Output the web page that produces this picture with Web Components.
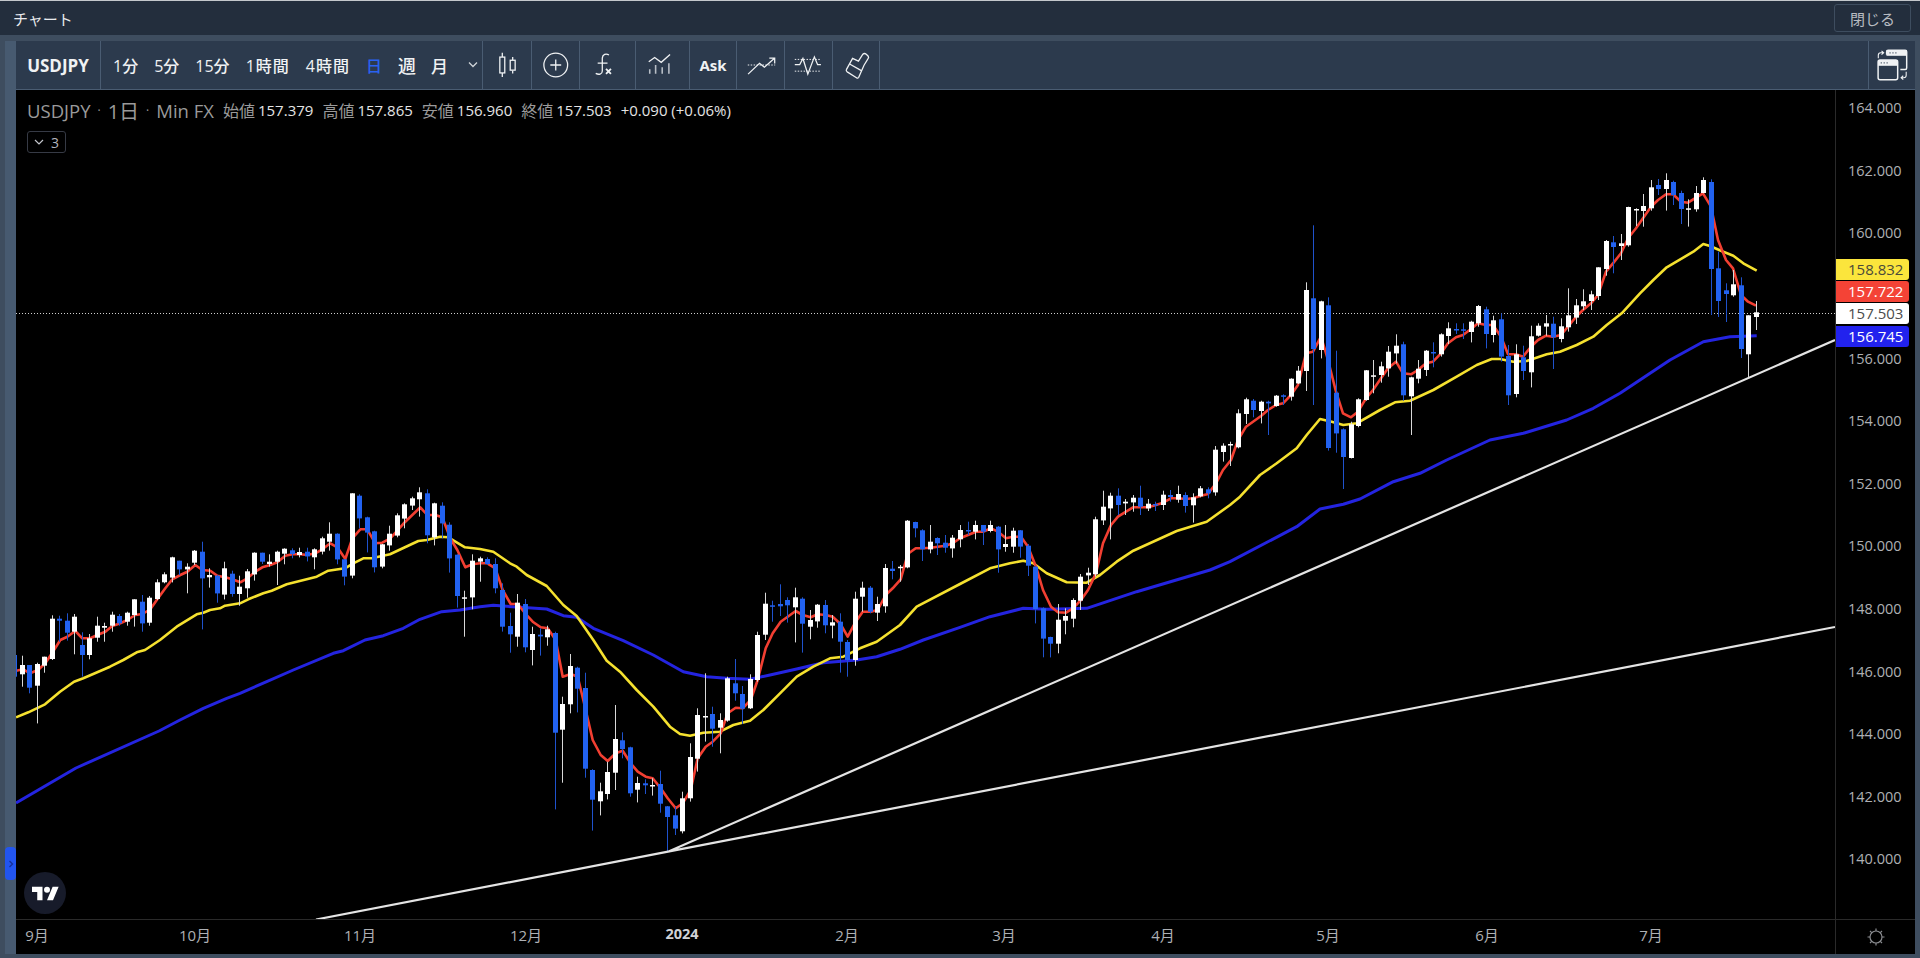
<!DOCTYPE html>
<html lang="ja">
<head>
<meta charset="utf-8">
<title>チャート</title>
<style>
  html, body { margin: 0; height: 100%; background: #3e4d5f; overflow: hidden; }
  body { font-family: "Open Sans", "Noto Sans CJK JP", sans-serif; }
</style>
</head>
<body>
<app-window heading="チャート" close-label="閉じる">
  <chart-toolbar></chart-toolbar>
  <chart-pane></chart-pane>
</app-window>

<script>
const FONT = `"Open Sans", "Noto Sans CJK JP", sans-serif`;

class AppWindow extends HTMLElement {
  constructor() {
    super();
    this.attachShadow({ mode: "open" });
    this.shadowRoot.innerHTML = `
      <style>
        :host { display: flex; flex-direction: column; height: 958px; font-family: ${FONT}; background: #3e4d5f; }
        .title {
          height: 34px; flex: none; display: flex; align-items: center; justify-content: space-between;
          background: #232e3d; border-top: 1px solid #c4c8cc; padding: 0 9px 0 13px; color: #e8eaed; font-size: 15px;
        }
        button {
          width: 77px; height: 28px; padding: 0; margin: 0; background: transparent; border: 1px solid #3e4d5f;
          border-radius: 3px; color: #b8bcc2; font: 15px ${FONT};
        }
        .frame { flex: 1; min-height: 0; display: flex; padding: 6px 5px 4px 5px; }
        .side { width: 11px; flex: none; background: #475a70; position: relative; }
        .handle {
          position: absolute; left: 0; top: 806px; width: 11px; height: 33px; background: #2255f0;
          border-radius: 4px; display: flex; align-items: center; justify-content: center;
        }
        .main { flex: 1; min-width: 0; display: flex; flex-direction: column; }
        ::slotted(chart-pane) { flex: 1; min-height: 0; }
      </style>
      <div class="title"><span id="heading"></span><button id="close"></button></div>
      <div class="frame">
        <div class="side">
          <div class="handle"><svg width="6" height="10" viewBox="0 0 6 10"><path d="M1.5 2l3 3-3 3" fill="none" stroke="#16309a" stroke-width="1.4"/></svg></div>
        </div>
        <div class="main"><slot></slot></div>
      </div>`;
  }
  connectedCallback() {
    this.shadowRoot.getElementById("heading").textContent = this.getAttribute("heading");
    this.shadowRoot.getElementById("close").textContent = this.getAttribute("close-label");
  }
}

// one toolbar cell, closed by a thin divider on the right
class ToolCell extends HTMLElement {
  constructor() {
    super();
    this.attachShadow({ mode: "open" });
    this.shadowRoot.innerHTML = `
      <style>
        :host {
          display: flex; align-items: center; justify-content: center; flex: none; box-sizing: border-box;
          height: 100%; border-right: 1px solid #4a5c72; color: #f0f2f4;
        }
        :host([borderless]) { border-right: 0; }
      </style>
      <slot></slot>`;
  }
}

class ChartToolbar extends HTMLElement {
  constructor() {
    super();
    this.attachShadow({ mode: "open" });
    const icon = (w, body) => `<svg width="${w}" height="48" viewBox="0 0 ${w} 48" fill="none" stroke="#f0f2f4" stroke-width="1.3">${body}</svg>`;
    this.shadowRoot.innerHTML = `
      <style>
        :host {
          display: flex; flex: none; height: 49px; box-sizing: border-box; background: #2c3a4d;
          border-bottom: 1px solid #4a5c72; color: #f0f2f4; font-family: ${FONT};
        }
        .symbol { font-size: 17px; font-weight: 700; }
        .intervals { display: flex; align-items: center; gap: 16px; font-size: 16px; font-weight: 500; padding-left: 12px; width: 100%; box-sizing: border-box; }
        .hours { letter-spacing: 1px; }
        .active { color: #2a62f0; }
        .week { font-size: 18px; margin-right: 2px; }
        .month { font-size: 17px; margin-left: -3px; margin-right: 2px; }
        .ask { font-size: 15px; font-weight: 700; }
        .grow { flex: 1; }
      </style>
      <tool-cell class="symbol" style="width:85px">USDJPY</tool-cell>
      <tool-cell style="width:382px">
        <div class="intervals">
          <span>1分</span><span>5分</span><span>15分</span><span class="hours">1時間</span><span class="hours">4時間</span>
          <span class="active">日</span><span class="week">週</span><span class="month">月</span>
          <svg width="14" height="8" viewBox="0 0 14 8" fill="none" stroke="#d0d4d8" stroke-width="1.3"><path d="M3 1.5l4 4 4-4"/></svg>
        </div>
      </tool-cell>
      <tool-cell style="width:48.5px">${icon(48, `
        <path d="M19.5 11.5v4.5M19.5 32v4M30 16v3M30 29.5v3"/>
        <rect x="17" y="16" width="5" height="16"/><rect x="27.5" y="19.2" width="5" height="10"/>`)}</tool-cell>
      <tool-cell style="width:48.5px">${icon(48, `<circle cx="24" cy="24" r="12"/><path d="M24 18.5v11M18.5 24h11"/>`)}</tool-cell>
      <tool-cell style="width:56px">${icon(56, `
        <path d="M29.5 13.8C26.5 12 23 13 22.7 17v13c0 3.5-3.6 4.2-6.7 2.5M18 22h10"/>
        <path d="M26.5 28l5 5M31.5 28l-5 5" stroke-width="1.9"/>`)}</tool-cell>
      <tool-cell style="width:54px">${icon(54, `
        <path d="M13 20.7l6-4.4 6.7 5 9-8"/>
        <path d="M14 28.3V33M20 24v9M26.7 26.3V33M33.5 22.3V33" stroke="#b8bec6" stroke-width="1.6"/>`)}</tool-cell>
      <tool-cell class="ask" style="width:47px">Ask</tool-cell>
      <tool-cell style="width:48px">${icon(48, `
        <path d="M11 24h28" stroke-dasharray="1.5 1.5" stroke-width="1"/>
        <path d="M11.3 33.3L23 22.3l5 4 10-9M33 17h5.5v5.5"/>`)}</tool-cell>
      <tool-cell style="width:48px">${icon(48, `
        <path d="M10 18.3h27M10 30.3h27" stroke-dasharray="1.5 1.5" stroke-width="1"/>
        <path d="M10 23.7h5l3.3-6.4 5 16 6.7-17.6 3.3 8h3.4"/>`)}</tool-cell>
      <tool-cell style="width:47px">${icon(47, `
        <path d="M20 17.3l6 2.7 4.5-7q1.5-1.5 3.5 0l2 2q1 1.5-.5 3l-3.8 6.3-5.4 12.2q-.8 1.5-2.3.5l-9.5-6q-1.5-1-.7-2.5z"/>
        <path d="M17 23l12.400 7"/>`)}</tool-cell>
      <div class="grow"></div>
      <tool-cell borderless style="width:47px;border-left:1px solid #4a5c72">${icon(47, `
        <path d="M18 13.5v-3q0-1.5 1.5-1.5h17.5q1.5 0 1.5 1.5v16.5q0 1.5-1.5 1.5h-5" stroke-width="1.5"/>
        <path d="M18.5 9.5h19.5v4.5H18.5z" fill="#f0f2f4"/>
        <rect x="9.3" y="19" width="20" height="20" rx="2" fill="#2c3a4d" stroke-width="1.5"/>
        <path d="M9.8 19.5h19v4.7h-19z" fill="#f0f2f4"/>
        <path d="M21 11.7h1M24 11.7h1M27 11.7h1M12 21.8h1M15 21.8h1M18 21.8h1" stroke="#2c3a4d"/>
        <path d="M9.5 17v-3q0-2.500 2.500-2.500h2.800M12.800 9.500l2.200 2-2.200 2" stroke-width="1.1"/>
        <path d="M38 31v3.500q0 2.500-2.500 2.500h-2.500M35 35l-2.200 2 2.200 2" stroke-width="1.1"/>`)}</tool-cell>`;
  }
}

// candles as read off the reference: [colour, high, body top, body bottom, low], in crop coordinates
const W = 1, B = 0;
const SEGMENTS = [
  { x0: 0, y0: 460, u0: 43.5, rows: [
    [B,585,585,650,650],[W,587,615,643,680],[B,615,615,683,700],[W,608,612,677,790],[W,590,590,617,638],[W,466,476,597,600],
    [B,467,476,482,545],[B,460,482,518,542],[W,462,470,515,583],[B,517,555,585,650],[W,522,535,585,598],[W,470,497,533,545],
    [W,488,498,503,545],[W,455,464,497,515],[B,462,468,490,497],[W,455,458,485,497],[W,418,418,465,500],[B,405,425,490,515],
    [W,408,413,488,497],[W,358,367,417,420],[W,337,343,367,370],[W,290,292,353,367],[B,302,302,328,345],[W,310,320,328,400],
    [W,270,272,308,315],[B,245,275,355,508],[W,325,345,352,383],[B,345,347,400,428],[W,305,325,404,418],[B,332,341,402,410],
    [W,347,380,402,437],[W,327,334,385,413],[W,277,278,343,362],[B,278,278,305,312],[W,283,305,312,320],[W,272,275,305,375],
    [W,265,266,281,313],[B,265,271,282,295],[W,263,276,285,292],[B,263,275,289,304],[W,265,268,292,328],[W,230,235,275,283],
    [W,187,221,245,272],[B,220,221,298,313],[B,298,298,350,376],[W,100,100,347,355],[B,103,107,175,205],[B,170,172,218,277],
    [B,212,214,322,337],[W,252,253,320,325],[W,197,221,256,272],[W,160,166,227,232],[W,130,133,176,205],[W,110,115,137,150],
    [W,82,97,118,170],[B,88,100,226,250],[W,128,130,232,256],[B,127,137,190,235],[B,187,194,295,338],[B,283,284,408,443],
    [W,392,412,416,530],[W,283,302,412,448] ] },
  { x0: 480, y0: 480, u0: 0, rows: [
    [W,230,235,245,305],[B,232,237,252,255],[B,235,252,325,340],[B,310,330,440,455],[B,398,438,463,518],[W,342,368,470,500],
    [B,357,372,502,517],[W,440,462,510,556],[B,445,464,469,527],[W,437,448,472,497],[B,455,459,758,988],[W,650,672,749,908],
    [W,522,558,673,700],[B,560,563,626,697],[B,578,624,866,893],[B,868,870,959,1052],[W,908,934,964,1006],[W,845,876,942,958],
    [W,675,777,878,930],[B,757,781,807,835],[B,800,802,940,950],[W,890,909,929,967],[B,898,910,916,942],[W,895,915,919,947],
    [B,872,912,971,998],[B,978,979,1011,1115],[B,980,1006,1046,1065],[W,935,955,1054,1060],[W,790,831,955,965],[W,685,705,836,875],
    [W,580,708,712,785],[B,680,702,746,800],[W,700,720,743,820],[W,590,595,722,725],[B,537,610,640,662],[B,618,642,686,732],
    [W,583,597,685,687],[W,455,465,600,605],[W,338,371,464,480],[B,362,376,380,425],[B,313,372,379,408],[B,352,360,376,428],
    [W,323,352,382,487],[B,352,356,431,518],[W,390,420,440,478],[W,372,374,424,443],[B,360,375,436,460],[W,405,427,437,475],
    [B,400,425,485,578],[B,480,486,540,590],[W,335,356,540,557],[W,305,323,350,395],[B,318,323,395,400],[W,350,372,398,423],
    [W,252,264,379,398],[B,243,266,273,298],[W,255,260,264,305],[W,120,122,262,265],[B,125,126,145,172],[B,148,151,208,243],
    [W,135,185,208,220],[B,172,174,190,225],[B,165,188,203,218],[W,165,173,205,233] ] },
  { x0: 960, y0: 400, u0: 2.5, rows: [
    [W,375,390,418,442],[B,365,390,394,405],[W,362,375,395,418],[B,375,375,395,435],[W,362,375,393,397],[B,378,380,448,518],
    [W,375,432,441,455],[W,383,392,440,458],[B,390,391,440,473],[B,432,437,497,528],[B,497,500,627,670],[B,622,625,716,772],
    [B,710,711,731,772],[W,612,659,731,760],[W,625,648,662,703],[W,595,600,656,682],[W,522,530,602,630],[W,503,518,526,555],
    [W,350,358,523,530],[W,272,320,361,375],[W,278,287,325,418],[B,265,287,315,345],[W,297,305,310,345],[W,285,293,307,335],
    [B,257,293,320,345],[W,297,311,325,333],[B,305,312,315,333],[W,272,284,315,330],[B,270,285,291,305],[W,257,282,299,308],
    [B,277,285,318,338],[W,280,292,316,368],[W,258,265,289,292],[B,262,268,280,295],[W,138,149,277,287],[W,130,137,156,185],
    [W,125,132,135,198],[W,28,40,142,145] ] },
  { x0: 1240, y0: 160, u0: 18, rows: [
    [W,713,718,762,792],[B,717,722,750,772],[W,722,725,753,790],[B,722,725,730,825],[W,705,707,738,740],[B,703,706,710,735],
    [W,655,656,710,722],[W,618,632,670,672],[W,367,390,633,693],[B,196,415,567,735],[W,422,424,570,595],[B,412,436,864,872],
    [B,572,698,820,878],[B,805,808,891,987],[W,785,793,894,895],[W,715,718,798,802],[W,630,631,720,722],[W,600,646,650,700],
    [W,605,619,645,668],[W,558,575,625,650],[W,523,557,580,610],[B,545,553,706,722],[W,650,652,709,825],[W,600,626,656,670],
    [W,570,572,630,648],[B,547,576,580,622],[W,520,523,583,590],[W,487,505,528,552],[B,490,507,510,522],[B,490,508,512,537],
    [W,482,485,516,547],[W,435,438,490,500],[B,440,448,522,565],[W,467,481,525,547],[B,460,478,590,605],[B,555,588,706,735],
    [W,553,583,702,712],[B,557,592,633,660],[W,497,529,637,682],[W,490,497,527,530],[W,465,490,500,527],[B,470,491,532,627],
    [W,475,499,537,547],[W,385,466,502,515],[W,417,436,473,492],[W,388,424,439,450],[W,392,403,423,450],[W,322,322,408,420],
    [W,240,243,327,347],[B,228,247,261,340],[W,222,250,258,300],[W,140,141,256,260],[W,145,147,150,198],[W,102,138,153,200],
    [W,60,82,145,152],[B,57,75,87,105],[W,40,60,87,152],[B,62,66,105,135],[B,92,99,147,192],[W,118,145,149,200],
    [W,78,99,148,155],[W,52,60,99,100],[B,58,66,327,465],[B,275,325,423,471],[B,370,391,402,486],[W,330,373,406,410],
    [B,352,376,567,594],[W,466,466,583,652],[W,423,457,471,510] ] }
];

// moving averages, same crop coordinates as the candles: [x0, y0, u, v, u, v, ...]
const RED = [
  [0,460, 48,632,70,628,90,640,114,630,136,610,157,578,181,540,202,530,226,513,247,535,271,535,292,525,316,515,337,498,361,490,382,480,406,465,427,462,451,448,472,418,496,385,517,358,541,345,562,335,586,315,607,330,631,332,652,347,676,352,697,358,721,367,742,355,766,335,787,322,811,315,832,307,856,287,877,283,901,283,922,285,946,280,967,268,991,250,1012,262,1036,297,1057,235,1081,208,1102,208,1126,250,1147,248,1171,235,1192,212,1216,185,1237,165,1261,142,1282,165,1306,165,1327,172,1351,235,1372,270,1396,322,1417,313,1440,310],
  [480,480, 22,250,46,265,68,330,92,372,113,372,137,402,158,425,182,442,203,445,227,480,248,590,272,582,293,590,317,690,338,780,362,825,383,843,407,820,428,812,452,850,473,875,497,890,518,895,542,925,563,955,587,985,608,970,632,930,653,835,677,800,698,785,722,760,743,700,767,683,788,685,812,660,833,600,857,505,878,460,902,425,923,410,947,393,968,405,992,412,1013,403,1037,405,1058,410,1082,433,1103,470,1127,425,1148,395,1172,395,1193,390,1217,345,1238,325,1262,298,1283,222,1307,205,1328,205,1352,203,1373,200,1397,197,1418,190,1440,175],
  [960,400, 24,405,48,395,69,395,93,385,114,395,138,415,159,410,183,410,204,440,228,500,249,570,273,620,294,637,318,638,339,625,363,600,384,570,408,520,429,430,453,375,474,350,498,335,519,322,543,322,564,322,588,315,609,308,633,295,654,295,678,297,699,295,723,287,744,282,768,250,789,210,813,180,834,120],
  [1240,160, 18,800,39,785,63,768,84,750,108,735,129,730,153,705,174,675,198,580,219,575,243,530,264,600,288,695,309,760,333,772,354,755,378,715,399,690,423,655,444,625,468,605,489,640,513,643,534,630,558,610,579,605,603,580,624,550,648,532,669,525,693,507,714,490,738,495,759,495,783,530,804,583,828,583,849,590,873,560,894,540,918,527,939,530,963,525,984,500,1008,470,1029,450,1053,430,1074,405,1098,335,1119,310,1143,280,1164,235,1188,205,1209,175,1233,140,1254,120,1278,103,1299,103,1323,125,1344,128,1368,113,1389,100,1413,140,1434,240,1458,300,1479,325,1503,405,1524,425,1548,437]
];
const YELLOW = [
  [0,460, 48,772,85,757,135,733,180,695,222,665,250,655,330,620,370,600,410,577,435,570,480,540,530,500,590,463,610,458,630,450,660,445,675,437,720,430,745,418,790,400,815,392,860,373,950,350,985,332,1035,325,1060,310,1090,295,1115,295,1170,283,1255,243,1280,240,1320,230,1345,232,1395,262,1440,267],
  [480,480, 40,215,90,250,110,260,140,285,200,318,250,375,290,408,340,480,380,542,420,575,470,630,520,680,570,740,600,762,630,767,670,758,720,755,760,735,810,722,850,690,900,640,950,590,1000,560,1050,535,1090,530,1140,505,1190,485,1260,435,1310,380,1440,312],
  [960,400, 90,505,150,490,190,482,220,490,260,520,320,547,380,548,420,525,470,485,520,452,650,393,740,365,810,315],
  [1240,160, 0,1010,60,945,110,910,170,865,200,825,240,777,275,785,310,795,350,790,420,750,465,727,510,722,580,690,650,650,710,615,755,597,780,597,820,605,860,603,920,583,960,575,1010,555,1060,530,1100,495,1145,460,1200,400,1240,360,1280,322,1360,275,1390,252,1410,258,1450,275,1480,287,1510,310,1550,332]
];
const BLUE = [
  [0,0, 16,803,76,768,159,731],
  [0,460, 540,780,610,745,680,715,720,700,800,665,880,630,1000,580,1030,572,1095,540,1150,527,1210,505,1260,478,1325,455,1380,450,1440,440],
  [480,480, 40,376,120,382,200,387,250,407,290,412,340,445,430,482,520,525,610,575,680,590,740,595,810,598,870,585,950,567,1030,548,1130,540,1190,530,1260,508,1330,480,1440,442],
  [960,400, 90,650,190,625,260,628,380,625,530,575,750,510,810,485,1010,380,1080,327,1150,313,1200,297],
  [1240,160, 460,965,540,940,620,900,750,840,850,820,980,780,1060,745,1140,700,1290,600,1390,545,1470,530,1550,527]
];

function linePoints(parts) {
  const pts = [];
  parts.forEach(([x0, y0, ...rest]) => {
    // the first part of BLUE is already in page pixels
    const scale = x0 === 0 && y0 === 0 ? 1 : 3;
    for (let i = 0; i < rest.length; i += 2) {
      pts.push(`${(x0 + rest[i] / scale).toFixed(1)},${(y0 + rest[i + 1] / scale).toFixed(1)}`);
    }
  });
  return pts.join(" ");
}

function candleMarkup() {
  let out = "";
  SEGMENTS.forEach(seg => {
    seg.rows.forEach(([white, hi, top, bot, lo], i) => {
      const x = Math.floor(seg.x0 + (seg.u0 + 22.5 * i) / 3);
      const y = v => seg.y0 + v / 3;
      const body = white ? "#ffffff" : "#2262f0";
      const wick = white ? "#d8d8d8" : "#1f52cc";
      const h = Math.max(y(bot) - y(top), 1.5);
      out += `<rect x="${x}" y="${y(hi).toFixed(1)}" width="1" height="${(y(lo) - y(hi)).toFixed(1)}" fill="${wick}"/>`;
      out += `<rect x="${x - 2}" y="${y(top).toFixed(1)}" width="5" height="${h.toFixed(1)}" fill="${body}"/>`;
    });
  });
  return out;
}

class LegendBar extends HTMLElement {
  constructor() {
    super();
    this.attachShadow({ mode: "open" });
    const ohlc = (k, v) => `<span class="k">${k}</span><span class="v">${v}</span>`;
    this.shadowRoot.innerHTML = `
      <style>
        :host { position: absolute; left: 11px; top: 8px; display: block; font-family: ${FONT}; color: #9a9a9a; pointer-events: none; }
        .row { display: flex; align-items: center; height: 24px; white-space: nowrap; font-size: 18.500px; }
        .dot { margin: 0 7px; font-size: 12px; }
        .k { font-size: 16px; margin-right: 3px; }
        .v { font-size: 15px; font-weight: 500; color: #e4e4e4; margin-right: 9px; }
        .ohlc { margin-left: 9px; display: flex; align-items: center; }
        .chg { font-size: 15px; font-weight: 500; color: #e4e4e4; }
        .toggle {
          margin-top: 9px; width: 39px; height: 22px; box-sizing: border-box; border: 1px solid #363a45; border-radius: 3px;
          display: flex; align-items: center; justify-content: center; gap: 7px; color: #b2b5be; font-size: 14px;
        }
      </style>
      <div class="row">
        <span>USDJPY</span><span class="dot">·</span><span style="font-size:20px">1日</span><span class="dot">·</span><span>Min FX</span>
        <div class="ohlc">
          ${ohlc("始値", "157.379")}${ohlc("高値", "157.865")}${ohlc("安値", "156.960")}${ohlc("終値", "157.503")}
          <span class="chg">+0.090 (+0.06%)</span>
        </div>
      </div>
      <div class="toggle"><svg width="10" height="6" viewBox="0 0 10 6" fill="none" stroke="#c4c6cc" stroke-width="1.2"><path d="M1 1l4 4 4-4"/></svg><span>3</span></div>`;
  }
}

class PriceAxis extends HTMLElement {
  constructor() {
    super();
    this.attachShadow({ mode: "open" });
    let ticks = "";
    // 158.000 sits under the price badges, the chart leaves it out
    for (let p = 164; p >= 140; p -= 2) ticks += `<div class="tick">${p === 158 ? "" : p + ".000"}</div>`;
    const badge = (top, bg, fg, text) => `<div class="badge" style="top:${top}px;background:${bg};color:${fg}">${text}</div>`;
    this.shadowRoot.innerHTML = `
      <style>
        :host { display: block; position: relative; overflow: hidden; box-sizing: border-box; border-left: 1px solid #2a2a2a; font-family: ${FONT}; font-size: 14.500px; color: #aeb0b4; }
        .ticks { margin-top: -12.800px; }
        .tick { height: 62.600px; line-height: 62.600px; padding-left: 12px; }
        .badge {
          position: absolute; left: -1px; width: 74px; height: 21px; line-height: 21px; padding-left: 13px; box-sizing: border-box;
          border-radius: 0 3px 3px 0; font-size: 15px; font-weight: 500;
        }
      </style>
      <div class="ticks">${ticks}</div>
      ${badge(169, "#fbe53c", "#4a4a3a", "158.832")}
      ${badge(191, "#f44336", "#ffffff", "157.722")}
      ${badge(212.500, "#ffffff", "#4c4c4c", "157.503")}
      ${badge(236, "#2222ee", "#ffffff", "156.745")}`;
  }
}

class TimeAxis extends HTMLElement {
  constructor() {
    super();
    this.attachShadow({ mode: "open" });
    const marks = [[37,"9月"],[195,"10月"],[360,"11月"],[526,"12月"],[682,"2024",1],[847,"2月"],[1004,"3月"],[1163,"4月"],[1328,"5月"],[1487,"6月"],[1651,"7月"]];
    this.shadowRoot.innerHTML = `
      <style>
        :host { display: block; position: relative; border-top: 1px solid #2a2a2a; font-family: ${FONT}; font-size: 15px; color: #aeb0b4; }
        span { position: absolute; top: 4px; transform: translateX(-50%); }
        .year { font-weight: 700; color: #d0d2d6; font-size: 14.500px; }
      </style>
      ${marks.map(([x, t, y]) => `<span class="${y ? "year" : ""}" style="left:${x - 16}px">${t}</span>`).join("")}`;
  }
}

class ChartPane extends HTMLElement {
  constructor() {
    super();
    this.attachShadow({ mode: "open" });
    this.shadowRoot.innerHTML = `
      <style>
        :host { display: grid; grid-template-columns: 1fr 80px; grid-template-rows: 1fr 35px; background: #000; }
        .plot { position: relative; min-height: 0; overflow: hidden; }
        svg.chart { display: block; width: 1819px; height: 829px; }
        .logo {
          position: absolute; left: 8px; top: 782px; width: 42px; height: 42px; border-radius: 50%; background: #171b2a;
          display: flex; align-items: center; justify-content: center;
        }
        .corner { border-left: 1px solid #2a2a2a; border-top: 1px solid #2a2a2a; display: flex; align-items: center; justify-content: center; }
      </style>
      <div class="plot">
        <svg class="chart" viewBox="16 90 1819 829" fill="none">
          <path d="M16 313.500H1835" stroke="#d0d0d0" stroke-dasharray="1 2"/>
          <polyline points="${linePoints(BLUE)}" stroke="#2424e0" stroke-width="3" stroke-linejoin="round"/>
          <polyline points="${linePoints(YELLOW)}" stroke="#f5e12f" stroke-width="2.600" stroke-linejoin="round"/>
          <polyline points="${linePoints(RED)}" stroke="#f23f32" stroke-width="2.600" stroke-linejoin="round"/>
          ${candleMarkup()}
          <path d="M668 851.700L1835 340M316 919.500L668 851.700L1835 627" stroke="#e4e4e4" stroke-width="2.200"/>
        </svg>
        <legend-bar></legend-bar>
        <div class="logo">
          <svg width="27" height="15" viewBox="0 4 36 18" fill="#fff"><path d="M14 22H7V11H0V4h14v18zM28 22h-8l7.500-18h8L28 22z"/><circle cx="20" cy="8" r="4"/></svg>
        </div>
      </div>
      <price-axis></price-axis>
      <time-axis></time-axis>
      <div class="corner">
        <svg width="20" height="20" viewBox="0 0 20 20" fill="none" stroke="#8a8c90" stroke-width="1.200">
          <circle cx="10" cy="10" r="6"/>
          <path d="M10 1.500v2.500M10 16v2.500M1.500 10h2.500M16 10h2.500M4 4l1.700 1.700M14.300 14.300L16 16M16 4l-1.700 1.700M5.700 14.300L4 16"/>
        </svg>
      </div>`;
  }
}

customElements.define("tool-cell", ToolCell);
customElements.define("chart-toolbar", ChartToolbar);
customElements.define("legend-bar", LegendBar);
customElements.define("price-axis", PriceAxis);
customElements.define("time-axis", TimeAxis);
customElements.define("chart-pane", ChartPane);
customElements.define("app-window", AppWindow);
</script>
</body>
</html>
